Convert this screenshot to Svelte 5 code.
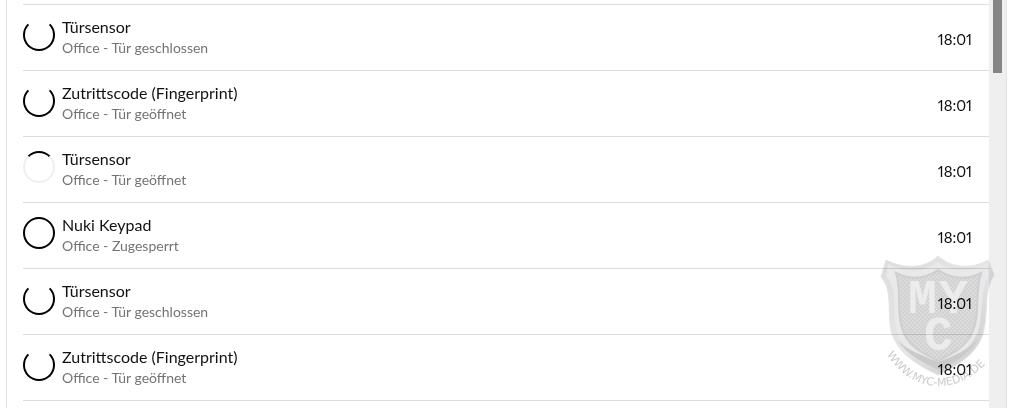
<script>
	const entries = [
		{ title: 'Türsensor', detail: 'Office - Tür geschlossen', time: '18:01', ring: 'open' },
		{ title: 'Zutrittscode (Fingerprint)', detail: 'Office - Tür geöffnet', time: '18:01', ring: 'open' },
		{ title: 'Türsensor', detail: 'Office - Tür geöffnet', time: '18:01', ring: 'arc' },
		{ title: 'Nuki Keypad', detail: 'Office - Zugesperrt', time: '18:01', ring: 'closed' },
		{ title: 'Türsensor', detail: 'Office - Tür geschlossen', time: '18:01', ring: 'open' },
		{ title: 'Zutrittscode (Fingerprint)', detail: 'Office - Tür geöffnet', time: '18:01', ring: 'open' }
	];
</script>

<div class="panel">
	<ul class="log">
		{#each entries as entry}
			<li class="entry">
				<span class="ring {entry.ring}"></span>
				<div class="text">
					<div class="title">{entry.title}</div>
					<div class="detail">{entry.detail}</div>
				</div>
				<time class="time">{entry.time}</time>
			</li>
		{/each}
	</ul>
	<div class="scrollbar"><div class="thumb"></div></div>

	<svg class="watermark" viewBox="0 0 126 150" aria-hidden="true">
		<defs>
			<pattern id="mesh" width="4" height="4" patternUnits="userSpaceOnUse">
				<rect width="4" height="4" fill="#dbdbdb" />
				<path d="M0 0h2v2h2v2h-2v-2h-2z" fill="#d2d2d2" />
			</pattern>
			<linearGradient id="rim" x1="0" y1="0" x2="1" y2="1">
				<stop offset="0" stop-color="#dcdcdc" />
				<stop offset="0.5" stop-color="#e6e6e8" />
				<stop offset="1" stop-color="#c8c8c8" />
			</linearGradient>
			<path id="curve" d="M13 102C38 144 90 146 121 100" />
		</defs>
		<path d="M12 8C30 17 51 17 64 4C78 17 99 17 114 8L120 23C109 38 115 61 109 82C102 103 84 113 64 123C43 113 25 102 18 82C12 62 20 40 7 25Z" fill="url(#rim)" stroke="#e4e4e4" />
		<path d="M14 12C32 22 51 20 64 10C78 20 97 22 112 12L115 23C105 39 110 60 104 79C97 98 81 106 64 114C46 105 29 97 23 79C17 60 26 40 12 24Z" fill="#e9e9ec" />
		<path d="M22 21C38 29 52 26 64 18C77 26 92 29 107 21C101 39 106 58 100 76C94 94 80 101 64 109C48 101 33 94 28 76C22 57 28 39 22 21Z" fill="url(#mesh)" stroke="#cfcfcf" stroke-width="2" />
		<path d="M23 88C34 104 49 110 64 118C81 110 96 102 104 87C94 98 80 104 64 110C47 103 33 98 23 88Z" fill="#cacaca" />
		<g class="letters">
			<text x="34" y="61">M</text>
			<text x="65" y="61">Y</text>
			<text x="50" y="98">C</text>
		</g>
		<text class="address"><textPath href="#curve">WWW.MYC-MEDIA.DE</textPath></text>
	</svg>
</div>

<style>
	:global(body) {
		margin: 0;
		background: #fff;
		font-family: Lato, "Liberation Sans", sans-serif;
	}
	.panel {
		position: relative;
		display: flex;
		min-height: 100vh;
		box-sizing: border-box;
		margin: 0 16px 0 6px;
		border: solid #e2e2e2;
		border-width: 0 1px;
	}

	/* --- Protokoll --- */
	.log {
		flex: 1;
		list-style: none;
		margin: 4px 0 0 16px;
		padding: 0;
		border-top: 1px solid #dcdcdc;
	}
	.entry {
		display: flex;
		align-items: flex-start;
		gap: 7px;
		padding: 13px 17px 10px 0;
		border-bottom: 1px solid #dcdcdc;
	}
	.ring {
		width: 32px;
		height: 32px;
		margin-top: 1px;
		box-sizing: border-box;
		border: 2px solid #000;
		border-radius: 50%;
	}
	.ring.open {
		border-top-color: transparent;
	}
	.ring.arc {
		border-color: #000 #efefef #efefef;
	}
	.text {
		flex: 1;
	}
	.title {
		font-size: 16px;
		line-height: 18px;
		color: #111;
	}
	.detail {
		font-size: 14px;
		line-height: 24px;
		color: #737373;
	}
	.time {
		align-self: center;
		font-size: 15px;
		line-height: 18px;
		font-variant-numeric: proportional-nums;
		color: #111;
	}

	/* --- Scrollleiste --- */
	.scrollbar {
		width: 17px;
		background: #efefef;
	}
	.thumb {
		width: 9px;
		height: 73px;
		margin: 0 auto;
		background: #858585;
	}

	/* --- Wasserzeichen --- */
	.watermark {
		position: absolute;
		right: 6px;
		bottom: 6px;
		width: 126px;
		height: 150px;
		mix-blend-mode: multiply;
		pointer-events: none;
	}
	.letters {
		font: bold 48px "Liberation Mono", monospace;
		fill: #ececec;
	}
	.address {
		font: 11px "DejaVu Sans", sans-serif;
		fill: #cbcbcb;
	}
</style>
